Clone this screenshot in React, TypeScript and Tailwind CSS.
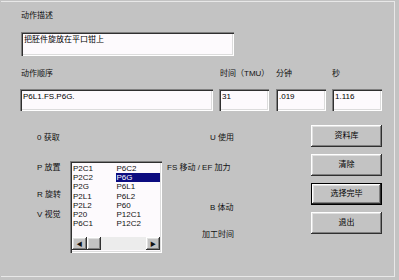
import { useState } from 'react';

const font = "font-['Liberation_Sans','Noto_Sans_CJK_SC',sans-serif]";
const sunken =
  'bg-[#fdfafd] shadow-[inset_1px_1px_0_#808080,inset_2px_2px_0_#303030,inset_-1px_-1px_0_#ffffff,inset_-2px_-2px_0_#dcdcdc]';
const raised =
  'bg-[#c3c3c3] shadow-[inset_-1px_-1px_0_#303030,inset_1px_1px_0_#ffffff,inset_-2px_-2px_0_#808080,inset_2px_2px_0_#e0e0e0]';

const col1 = ['P2C1', 'P2C2', 'P2G', 'P2L1', 'P2L2', 'P20', 'P6C1'];
const col2 = ['P6C2', 'P6G', 'P6L1', 'P6L2', 'P60', 'P12C1', 'P12C2'];

function Field({ value, className }: { value: string; className: string }) {
  return (
    <div className={`${sunken} ${className} px-[3px] pt-[3px] text-[8px] leading-[10px] text-black`}>
      {value}
    </div>
  );
}

function Button({ label, isDefault }: { label: string; isDefault?: boolean }) {
  return (
    <div className={isDefault ? 'border border-black' : ''}>
      <div
        className={`${raised} flex items-center justify-center text-[8px] text-black ${
          isDefault ? 'h-[20px]' : 'h-[22px]'
        }`}
      >
        {label}
      </div>
    </div>
  );
}

export default function App() {
  const [selected] = useState('P6G');

  return (
    <div className={`w-[399px] h-[280px] bg-[#c3c3c3] overflow-hidden ${font} text-[8px] leading-[10px] text-[#111]`}>
      <div className="ml-[1px] mt-[1px] w-[394px] h-[276px] border-t border-r border-b border-[#e8e8e8]">
        {/* 动作描述 */}
        <div className="pl-[20px] pt-[9px]">
          <div>动作描述</div>
          <Field value="把胚件旋放在平口钳上" className="mt-[11px] w-[213px] h-[24px]" />
        </div>

        {/* 动作顺序 + 时间 */}
        <div className="flex pl-[19px] mt-[13px]">
          <div className="w-[193px]">
            <div className="pl-[1px]">动作顺序</div>
            <Field value="P6L1.FS.P6G." className="mt-[10px] h-[22px]" />
          </div>
          <div className="ml-[6px] w-[50px]">
            <div className="pl-[1px]">时间（TMU）</div>
            <Field value="31" className="mt-[10px] h-[22px]" />
          </div>
          <div className="ml-[7px] w-[50px]">
            <div>分钟</div>
            <Field value=".019" className="mt-[10px] h-[22px]" />
          </div>
          <div className="ml-[6px] w-[50px]">
            <div>秒</div>
            <Field value="1.116" className="mt-[10px] h-[22px]" />
          </div>
        </div>

        {/* 下部 */}
        <div className="flex mt-[9px]">
          <div className="ml-[36px] w-[33px] flex flex-col">
            <div className="mt-[13px]">0 获取</div>
            <div className="mt-[20px]">P 放置</div>
            <div className="mt-[17px]">R 旋转</div>
            <div className="mt-[10px]">V 视觉</div>
          </div>

          <div className={`${sunken} mt-[41px] w-[92px] h-[92px] p-[2px] flex flex-col`}>
            <div className="flex pt-[1px] text-[8px]">
              <div className="w-[44px] flex flex-col">
                {col1.map((item) => (
                  <div key={item} className="h-[9.2px] leading-[9.2px] pl-[1px]">
                    {item}
                  </div>
                ))}
              </div>
              <div className="w-[45px] flex flex-col">
                {col2.map((item) => (
                  <div
                    key={item}
                    className={`h-[9.2px] leading-[9.2px] pl-[1px] ${
                      item === selected ? 'bg-[#0c0c80] text-white' : ''
                    }`}
                  >
                    {item}
                  </div>
                ))}
              </div>
            </div>
            <div className="mt-auto mb-[1px] h-[13px] flex bg-[#ececec]">
              <div className={`${raised} w-[15px] flex items-center justify-center text-[6px]`}>◀</div>
              <div className={`${raised} w-[14px]`} />
              <div className="flex-1" />
              <div className={`${raised} w-[14px] flex items-center justify-center text-[6px]`}>▶</div>
            </div>
          </div>

          <div className="ml-[5px] w-[144px] flex flex-col">
            <div className="mt-[13px] pl-[43px]">U 使用</div>
            <div className="mt-[20px]">FS 移动 / EF 加力</div>
            <div className="mt-[30px] pl-[43px]">B 体动</div>
            <div className="mt-[17px] pl-[35px]">加工时间</div>
          </div>

          <div className="w-[71px] mt-[5px] flex flex-col gap-[7px]">
            <Button label="资料库" />
            <Button label="清除" />
            <Button label="选择完毕" isDefault />
            <Button label="退出" />
          </div>
        </div>
      </div>
    </div>
  );
}
